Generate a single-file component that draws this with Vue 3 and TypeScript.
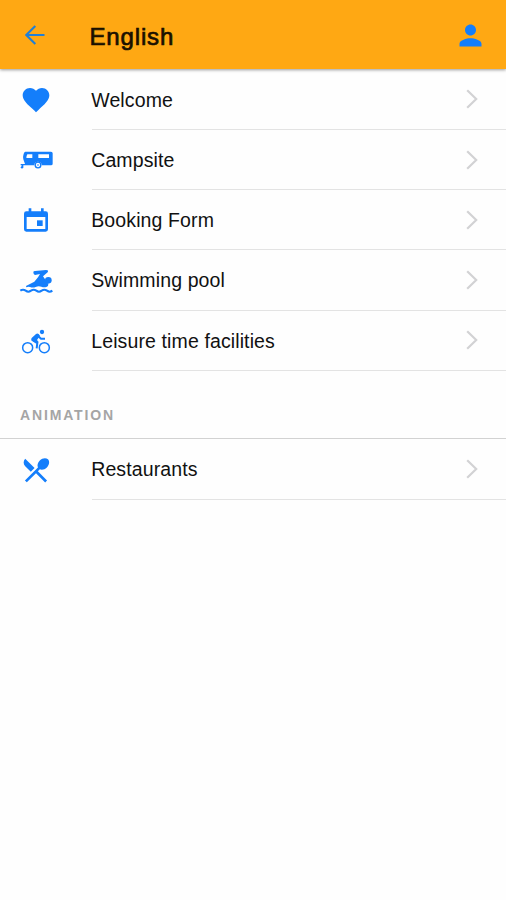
<script setup lang="ts">
type Icon = 'heart' | 'caravan' | 'calendar' | 'swim' | 'bike' | 'dining'

interface Item {
  label: string
  icon: Icon
}

interface Section {
  title?: string
  items: Item[]
}

const sections: Section[] = [
  {
    items: [
      { label: 'Welcome', icon: 'heart' },
      { label: 'Campsite', icon: 'caravan' },
      { label: 'Booking Form', icon: 'calendar' },
      { label: 'Swimming pool', icon: 'swim' },
      { label: 'Leisure time facilities', icon: 'bike' },
    ],
  },
  { title: 'ANIMATION', items: [{ label: 'Restaurants', icon: 'dining' }] },
]
</script>

<template>
  <div class="screen">
    <header class="bar">
      <button class="back" aria-label="Back">
        <svg viewBox="0 0 20 20"><path d="M19.5 10H1.5M10.3 1 1.3 10l9 9" /></svg>
      </button>
      <h1>English</h1>
      <button class="account" aria-label="Account">
        <svg viewBox="0 0 24 24"><path d="M12 12c2.21 0 4-1.79 4-4s-1.79-4-4-4-4 1.79-4 4 1.79 4 4 4zm0 2c-2.67 0-8 1.34-8 4v2h16v-2c0-2.66-5.33-4-8-4z" /></svg>
      </button>
    </header>

    <main>
      <section v-for="(section, i) in sections" :key="i">
        <h2 v-if="section.title">{{ section.title }}</h2>
        <ul>
          <li v-for="item in section.items" :key="item.label">
            <svg v-if="item.icon === 'heart'" class="icon" viewBox="0 0 24 24">
              <path d="M12 21.1l-1.45-1.32C5.4 15.16 2 12.28 2 8.5 2 5.42 4.42 3 7.5 3c1.74 0 3.41.81 4.5 2.09C13.09 3.81 14.76 3 16.5 3 19.58 3 22 5.42 22 8.5c0 3.78-3.4 6.66-8.55 11.29L12 21.1z" />
            </svg>
            <svg v-else-if="item.icon === 'calendar'" class="icon" viewBox="30 12 96 96">
              <path fill-rule="evenodd" d="M56 25h8v9h29v-9h8v9h6q7 0 7 7v47q0 7-7 7H49q-7 0-7-7V41q0-7 7-7h7zM50 51v36h56V51z" />
              <path d="M81 61h17v17H81z" />
            </svg>
            <svg v-else-if="item.icon === 'caravan'" class="icon" viewBox="30 12 96 96">
              <path fill-rule="evenodd" d="M46 35h77q5 0 5 5v31q0 5-5 5H95a11 11 0 0 0-22 0H40v6h-5v-6h-3v-4h13l-5-14q-2-5 0-12 2-11 6-11zM52 43q-3 5-3 11h18V43zM85 43v11h32V43z" />
              <circle class="line" cx="84" cy="75" r="8.5" />
              <circle cx="84" cy="75" r="2.5" />
              <circle cx="36" cy="82" r="3.5" />
            </svg>
            <svg v-else-if="item.icon === 'swim'" class="icon" viewBox="30 12 96 96">
              <path d="M70 34q0-4 5-4l33-3q9 0 5 7L99 46l16 23q1 7-6 9-8 2-15-1-9-3-17 1-8 3-17 0-5-2-11 1l-1-4 25-13 11-13 6-10-15 3q-5-1-5-8z" />
              <circle cx="115" cy="58" r="10" />
              <path class="wave" d="M31 89q8-6 16 0t16 0 16 0 16 0 16 0 16 0" />
            </svg>
            <svg v-else-if="item.icon === 'bike'" class="icon" viewBox="30 12 96 96">
              <circle class="wheel" cx="53" cy="80" r="15" />
              <circle class="wheel" cx="103" cy="80" r="15" />
              <circle cx="96" cy="33" r="6.5" />
              <path class="body" d="M81 43 69 57l13 8-2 17M82 43l11 10h12" />
              <path d="M78 39q4-3 8 0l4 5-9 13 5 6-7 5-14-9q-3-4 0-8z" />
            </svg>
            <svg v-else class="icon" viewBox="0 0 24 24">
              <path d="M8.1 13.34l2.83-2.83L3.91 3.5c-1.56 1.56-1.56 4.09 0 5.66l4.19 4.18zm6.78-1.81c1.53.71 3.68.21 5.27-1.38 1.91-1.91 2.28-4.65.81-6.12-1.46-1.46-4.2-1.1-6.12.81-1.59 1.59-2.09 3.74-1.38 5.27L3.7 19.87l1.41 1.41L12 14.41l6.88 6.88 1.41-1.41L13.41 13l1.47-1.47z" />
            </svg>
            <div class="cell">
              <span>{{ item.label }}</span>
              <svg class="chevron" viewBox="0 0 12 20"><path d="m1.2 1.2 9 8.8-9 8.8" /></svg>
            </div>
          </li>
        </ul>
      </section>
    </main>
  </div>
</template>

<style>
body {
  margin: 0;
  background: #fefefe;
}
</style>

<style scoped>
.screen {
  box-sizing: border-box;
  min-height: 900px;
  background: #fefefe;
  color: #111;
  font-family: "Liberation Sans", Arial, sans-serif;
}
.bar {
  display: flex;
  align-items: center;
  box-sizing: border-box;
  height: 69px;
  padding: 0 19.5px 0 25px;
  background: #ffa813;
  box-shadow: 0 1px 3px rgba(0, 0, 0, 0.4);
}
button {
  display: flex;
  padding: 0;
  border: 0;
  background: none;
}
.back svg {
  width: 20px;
  height: 20px;
  fill: none;
  stroke: #217fd6;
  stroke-width: 2.1;
}
.account {
  margin: 1.5px 0 0 auto;
}
.account svg {
  width: 33px;
  height: 33px;
  fill: #147efb;
}
h1 {
  margin: 4px 0 0 44.5px;
  font-size: 24px;
  font-weight: 400;
  line-height: 30px;
  letter-spacing: 0.85px;
  color: #1a1000;
  -webkit-text-stroke: 0.7px #1a1000;
}
main {
  padding-top: 0.6px;
}
ul {
  margin: 0;
  padding: 0;
  list-style: none;
}
li {
  display: flex;
  align-items: center;
  height: 60.3px;
  padding-left: 20px;
}
.icon {
  flex: none;
  width: 32px;
  height: 32px;
  overflow: visible;
  fill: #147efb;
}
.line {
  fill: #fefefe;
  stroke: #147efb;
  stroke-width: 4;
}
.wave {
  fill: none;
  stroke: #147efb;
  stroke-width: 6;
}
.wheel {
  fill: none;
  stroke: #147efb;
  stroke-width: 4.5;
}
.body {
  fill: none;
  stroke: #147efb;
  stroke-width: 6;
}
.cell {
  display: flex;
  flex: 1;
  align-items: center;
  justify-content: space-between;
  box-sizing: border-box;
  height: 100%;
  margin-left: 40px;
  padding-right: 28px;
  border-bottom: 1px solid #e3e3e3;
  font-size: 19.5px;
  letter-spacing: 0.12px;
  white-space: nowrap;
}
.cell span {
  margin-left: -0.8px;
  padding-top: 1.6px;
}
.chevron {
  width: 12px;
  height: 20px;
  fill: none;
  stroke: #d2d2d4;
  stroke-width: 2.2;
}
h2 {
  box-sizing: border-box;
  height: 68.4px;
  margin: 0;
  padding: 34.8px 20px 0;
  border-bottom: 1.5px solid #d2d2d2;
  color: #a5a5a5;
  font-size: 14px;
  font-weight: 700;
  line-height: 18px;
  letter-spacing: 1.85px;
}
</style>
